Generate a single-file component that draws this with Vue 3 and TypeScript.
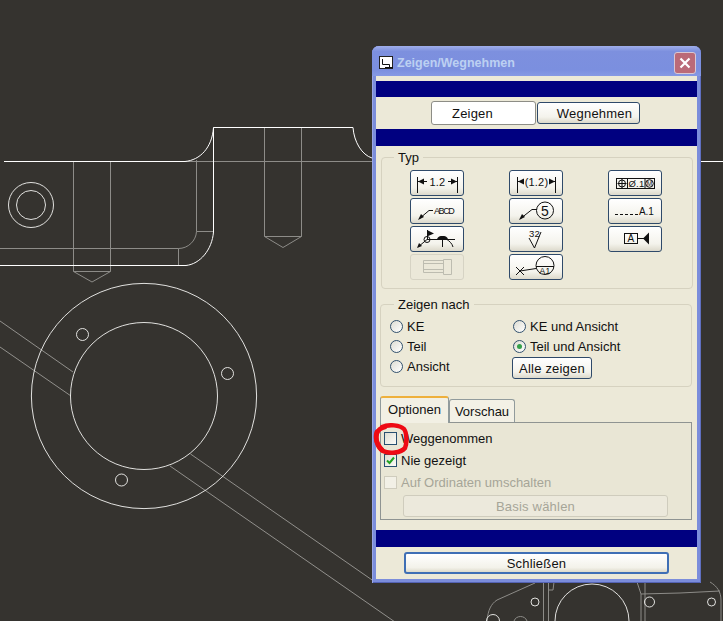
<script setup lang="ts">
import { ref } from 'vue'

type Item = { label: string; checked: boolean }

const activeTab = ref('Optionen')
const leftRadios: Item[] = [
  { label: 'KE', checked: false },
  { label: 'Teil', checked: false },
  { label: 'Ansicht', checked: false }
]
const rightRadios: Item[] = [
  { label: 'KE und Ansicht', checked: false },
  { label: 'Teil und Ansicht', checked: true }
]
</script>

<template>
  <div class="desktop">
    <!-- cad drawing behind the dialog -->
    <svg class="drawing" width="723" height="621" viewBox="0 0 723 621" fill="none">
      <g stroke="#8d8c88" stroke-width="1">
        <path d="M185 161.5H372M700 161.5H723" />
        <path d="M196.5 160V231.5H213M196.5 231.5C196 241 188 248.5 178.5 248.5H0M178.5 248.5V265" />
        <path d="M73.5 161V271.5M110.5 161V271.5M73.5 271.5H110.5M73.5 271.5L92 282L110.5 271.5" />
        <path d="M264.5 127V236.5M301.5 127V236.5M264.5 236.5H301.5M264.5 236.5L283 247.5L301.5 236.5" />
        <path d="M535 583L497 600C491 604 488 610 487 621" />
        <path d="M543.5 582V621M548.5 582V621M554 582L553 590H548M637 582L641 594V621M645 582V621" />
        <path d="M641 594L680 593L720 591M710 582C717 586 721 592 721 600V621" />
        <path d="M514 621C516 615 525 615 527 621" />
      </g>
      <g stroke="#a9a8a4" stroke-width="0.8">
        <path d="M0 321L73 372M0 347L71 396" />
        <path d="M190.5 454L375 582M170 466L395 622" />
      </g>
      <g stroke="#fff" stroke-width="1">
        <path d="M4 161.5H185C200 160 212 148 213.5 127.5H353C354 142 362 155 372 158" />
        <path d="M213.5 127.5V232C212 250 200 264 186 265.5H0" />
        <path d="M700 161.5H723" />
      </g>
      <g stroke="#f4f4f2" stroke-width="0.9">
        <circle cx="31" cy="205" r="22.5" />
        <circle cx="31" cy="205" r="14.5" />
        <circle cx="144" cy="396" r="112.6" />
        <circle cx="144" cy="396" r="73.5" />
        <circle cx="82.5" cy="334.5" r="6" />
        <circle cx="227.5" cy="373.5" r="6" />
        <circle cx="121.5" cy="480" r="6" />
        <circle cx="535" cy="602" r="4" />
        <circle cx="649.5" cy="602" r="5" />
        <circle cx="711.5" cy="602" r="4" />
        <circle cx="592" cy="621" r="37" />
        <circle cx="493" cy="621" r="6.5" />
      </g>
    </svg>

    <div class="window">
      <div class="titlebar">
        <svg class="title-icon" width="15" height="14" viewBox="0 0 15 14">
          <rect x="0.5" y="0.5" width="13" height="12" fill="#fff" stroke="#222" />
          <path d="M3.5 3V8.5H10.5V11M6 11.5H14" stroke="#111" stroke-width="1" fill="none" />
        </svg>
        <span class="title-text">Zeigen/Wegnehmen</span>
        <span class="close-btn">
          <svg width="12" height="12" viewBox="0 0 12 12">
            <path d="M1.5 1.5L10.5 10.5M10.5 1.5L1.5 10.5" stroke="#fff" stroke-width="2.2" />
          </svg>
        </span>
      </div>

      <div class="content">
        <div class="navy first"></div>
        <div class="mode-row">
          <button class="btn mode on">Zeigen</button>
          <button class="btn mode off">Wegnehmen</button>
        </div>
        <div class="navy second"></div>

        <div class="group typ">
          <span class="legend">Typ</span>
          <div class="icon-grid">
            <button class="btn icon">
              <svg width="54" height="26" viewBox="0 0 54 26">
                <path d="M7.5 7V23M47.5 7V23M8 11.5H17M38 11.5H47" stroke="#111" fill="none" />
                <path d="M8 11.5L14 8.5V14.5ZM47 11.5L41 8.5V14.5Z" fill="#111" />
                <text x="27.5" y="15.5" class="t" font-size="11" text-anchor="middle">1.2</text>
              </svg>
            </button>
            <button class="btn icon">
              <svg width="54" height="26" viewBox="0 0 54 26">
                <path d="M8.5 7V23M46.5 7V23M9 11.5H15M40 11.5H46" stroke="#111" fill="none" />
                <path d="M9 11.5L15 8.5V14.5ZM46 11.5L40 8.5V14.5Z" fill="#111" />
                <text x="27.5" y="15.5" class="t" font-size="11" text-anchor="middle">(1.2)</text>
              </svg>
            </button>
            <button class="btn icon">
              <svg width="54" height="26" viewBox="0 0 54 26">
                <rect x="8.5" y="8.5" width="38" height="10" fill="none" stroke="#111" />
                <path d="M19.5 8V18M37 8V18" stroke="#111" />
                <circle cx="14" cy="13.5" r="3.5" fill="none" stroke="#111" />
                <path d="M14 9V18M9.5 13.5H18.5" stroke="#111" />
                <text x="20.5" y="17" class="t" font-size="9.5">Ø.1</text>
                <circle cx="41.5" cy="13.5" r="3.8" fill="none" stroke="#111" />
                <text x="41.5" y="16" class="t" font-size="6.5" text-anchor="middle">M</text>
              </svg>
            </button>

            <button class="btn icon">
              <svg width="54" height="26" viewBox="0 0 54 26">
                <path d="M9 21L19 12.5H23" stroke="#111" fill="none" />
                <path d="M8 22L11 16L14 19Z" fill="#111" />
                <text x="24" y="16" class="t" font-size="9" textLength="21">ABCD</text>
              </svg>
            </button>
            <button class="btn icon">
              <svg width="54" height="26" viewBox="0 0 54 26">
                <path d="M11 21L23 11.5H28" stroke="#111" fill="none" />
                <path d="M10 22L13 16L16 19Z" fill="#111" />
                <circle cx="36" cy="12.5" r="8.5" fill="none" stroke="#111" />
                <text x="36" y="17.5" class="t" font-size="14" text-anchor="middle">5</text>
              </svg>
            </button>
            <button class="btn icon">
              <svg width="54" height="26" viewBox="0 0 54 26">
                <path d="M7 16.5H10M12 16.5H15M17 16.5H20M22 16.5H25M27 16.5H30" stroke="#111" />
                <text x="31" y="17" class="t" font-size="10" textLength="15">A.1</text>
              </svg>
            </button>

            <button class="btn icon">
              <svg width="54" height="26" viewBox="0 0 54 26">
                <path d="M8 21L17 13.5H45M32.5 14V21M37 13.5C39 15 42 17 43 21" stroke="#111" fill="none" />
                <path d="M7 22L9 17L12 20Z" fill="#111" />
                <circle cx="17" cy="13.5" r="3" fill="none" stroke="#111" />
                <path d="M17.5 4V13" stroke="#111" />
                <path d="M17 4L24 7.5L17 10.5Z" fill="#111" />
                <path d="M27 13C28 10.5 30 10 32.5 10C35 10 37 10.5 38 13Z" fill="#111" />
              </svg>
            </button>
            <button class="btn icon">
              <svg width="54" height="26" viewBox="0 0 54 26">
                <path d="M20 12L25.5 22L32 6" stroke="#111" fill="none" />
                <text x="20" y="11" class="t" font-size="9.5">32</text>
              </svg>
            </button>
            <button class="btn icon">
              <svg width="54" height="26" viewBox="0 0 54 26">
                <rect x="16.5" y="7.5" width="13" height="10" fill="none" stroke="#111" />
                <text x="23" y="16" class="t" font-size="10" text-anchor="middle">A</text>
                <path d="M30 12.5H37" stroke="#111" />
                <path d="M35 12.5L41 6.5V18.5Z" fill="#111" />
              </svg>
            </button>

            <button class="btn icon disabled">
              <svg width="54" height="26" viewBox="0 0 54 26">
                <path d="M13.5 6.5H33.5V18.5H13.5ZM33.5 5.5H41.5V20.5H33.5ZM14 9.5H33M14 15.5H33" stroke="#bdbcb0" fill="none" />
              </svg>
            </button>
            <button class="btn icon">
              <svg width="54" height="26" viewBox="0 0 54 26">
                <path d="M7 13L15 21M15 13L7 21M11 17L27 14.5" stroke="#111" fill="none" />
                <circle cx="36" cy="11.5" r="9" fill="none" stroke="#111" />
                <path d="M27 12.5H45" stroke="#111" />
                <text x="36" y="20" class="t" font-size="8.5" text-anchor="middle">A1</text>
              </svg>
            </button>
          </div>
        </div>

        <div class="group nach">
          <span class="legend">Zeigen nach</span>
          <div class="radio-cols">
            <div class="radio-col">
              <label v-for="r in leftRadios" :key="r.label" class="radio-row">
                <span class="radio"></span>{{ r.label }}
              </label>
            </div>
            <div class="radio-col">
              <label v-for="r in rightRadios" :key="r.label" class="radio-row">
                <span class="radio" :class="{ checked: r.checked }"></span>{{ r.label }}
              </label>
              <button class="btn all">Alle zeigen</button>
            </div>
          </div>
        </div>

        <div class="tabs">
          <span class="tab" :class="{ active: activeTab === 'Optionen' }">Optionen</span>
          <span class="tab" :class="{ active: activeTab === 'Vorschau' }">Vorschau</span>
        </div>
        <div class="panel">
          <label class="check-row"><span class="check"></span>Weggenommen</label>
          <label class="check-row">
            <span class="check">
              <svg width="11" height="11" viewBox="0 0 11 11">
                <path d="M2 5.5L4.5 8L9 2.5" stroke="#21a121" stroke-width="2" fill="none" />
              </svg>
            </span>
            Nie gezeigt
          </label>
          <label class="check-row off"><span class="check"></span>Auf Ordinaten umschalten</label>
          <button class="btn basis">Basis wählen</button>
        </div>

        <div class="navy third"></div>
        <div class="close-row">
          <button class="btn close-main">Schließen</button>
        </div>
      </div>

      <!-- hand drawn mark around the first checkbox -->
      <svg class="scribble" width="38" height="34" viewBox="0 0 38 34" fill="none">
        <path d="M9 4C16 1 27 2 31 6C34 10 34 20 32 25C28 30 16 31 10 28C4 24 2 16 4 10C5 7 8 5 12 4" stroke="#ee0a14" stroke-width="4.5" stroke-linecap="round" />
        <path d="M4 9C2 15 4 22 9 27" stroke="#ee0a14" stroke-width="5" stroke-linecap="round" />
      </svg>
    </div>
  </div>
</template>

<style scoped>
.desktop {
  position: relative;
  width: 723px;
  height: 621px;
  overflow: hidden;
  background: #35332f;
  font-family: "Liberation Sans", Arial, sans-serif;
  font-size: 13px;
  color: #111;
}

.drawing {
  position: absolute;
  left: 0;
  top: 0;
}

.window {
  position: absolute;
  left: 372px;
  top: 46px;
  width: 329px;
  height: 537px;
  display: flex;
  flex-direction: column;
  box-sizing: border-box;
  padding: 0 4px 4px;
  border-radius: 7px 7px 0 0;
  background: #7b8ddb;
  box-shadow: inset 1px 0 #9aa6e6, inset -1px 0 #5f6fc0, inset 0 -1px #5563b4;
}

.titlebar {
  height: 30px;
  flex: none;
  display: flex;
  align-items: center;
  margin: 0 -4px;
  padding: 3px 5px 0 7px;
  box-sizing: border-box;
  border-radius: 7px 7px 0 0;
  background: linear-gradient(#a0aeeb, #7d90de 18%, #7b8fdf 80%, #8699e4);
}

.title-icon {
  flex: none;
}

.title-text {
  margin-left: 3px;
  font-size: 12.5px;
  font-weight: bold;
  color: #bcd0f2;
}

.close-btn {
  margin-left: auto;
  width: 20px;
  height: 20px;
  display: flex;
  align-items: center;
  justify-content: center;
  border: 1px solid #d9c8d4;
  border-radius: 3px;
  background: #bb6a78;
}

.content {
  flex: 1;
  display: flex;
  flex-direction: column;
  background: #ece9d8;
  padding-top: 5px;
}

.navy {
  flex: none;
  background: #000080;
}

.navy.first {
  height: 16px;
}

.navy.second {
  height: 17px;
}

.navy.third {
  height: 17px;
  margin-top: 10px;
}

.mode-row {
  height: 32px;
  flex: none;
  display: flex;
  align-items: center;
  gap: 1px;
  padding-left: 55px;
}

.btn {
  display: block;
  box-sizing: border-box;
  padding: 0;
  font-family: inherit;
  font-size: 13px;
  letter-spacing: 0.2px;
  color: #111;
  border: 1px solid #2f4a6a;
  border-radius: 3px;
  background: linear-gradient(#fff, #f4f3ec 70%, #dcd9cb);
}

.mode.on {
  width: 105px;
  height: 24px;
  padding-right: 22px;
  background: #fff;
  border-color: #8d8d86;
}

.mode.off {
  width: 103px;
  height: 22px;
  padding-left: 12px;
}

.group {
  position: relative;
  flex: none;
  box-sizing: border-box;
  border: 1px solid #d6d2c0;
  border-radius: 4px;
}

.legend {
  position: absolute;
  top: -8px;
  padding: 0 4px;
  line-height: 15px;
  background: #ece9d8;
}

.typ {
  width: 312px;
  height: 132px;
  margin: 11px 0 0 5px;
  padding: 12px 0 0 28px;
}

.typ .legend {
  left: 12px;
}

.icon-grid {
  display: grid;
  grid-template-columns: repeat(3, 54px);
  grid-auto-rows: 26px;
  column-gap: 45px;
  row-gap: 2px;
}

.icon svg {
  display: block;
  margin: -1px;
}

.t {
  font-family: "Liberation Sans", Arial, sans-serif;
  fill: #111;
}

.icon.disabled {
  border-color: #d6d3c4;
  background: #ebe8d9;
}

.nach {
  width: 312px;
  height: 83px;
  margin: 15px 0 0 4px;
  padding: 11px 0 0 9px;
}

.nach .legend {
  left: 13px;
}

.radio-cols {
  display: flex;
}

.radio-col {
  width: 122px;
}

.radio-col:first-child {
  width: 123px;
}

.radio-row {
  display: flex;
  align-items: center;
  height: 20px;
  white-space: nowrap;
}

.radio {
  width: 13px;
  height: 13px;
  margin-right: 4px;
  flex: none;
  box-sizing: border-box;
  display: flex;
  align-items: center;
  justify-content: center;
  border: 1px solid #32516e;
  border-radius: 50%;
  background: linear-gradient(135deg, #dcdcd2, #fff);
}

.radio.checked::after {
  content: "";
  width: 5px;
  height: 5px;
  border-radius: 50%;
  background: #34a04a;
}

.btn.all {
  width: 80px;
  height: 22px;
  margin: 1px 0 0 -1px;
}

.tabs {
  flex: none;
  height: 26px;
  margin: 9px 0 0 4px;
  display: flex;
  align-items: flex-end;
}

.tab {
  box-sizing: border-box;
  width: 66px;
  height: 23px;
  line-height: 23px;
  text-align: center;
  border: 1px solid #919b9c;
  border-bottom: none;
  border-radius: 3px 3px 0 0;
  background: #f3f1e6;
}

.tab.active {
  position: relative;
  z-index: 1;
  width: 69px;
  height: 27px;
  margin-bottom: -1px;
  line-height: 24px;
  border-top: 2px solid #eeb03c;
  background: #f2f0e4;
}

.panel {
  flex: none;
  box-sizing: border-box;
  width: 312px;
  height: 98px;
  margin-left: 4px;
  padding: 4px 0 0 3px;
  border: 1px solid #8f9492;
  background: #e9e6d5;
}

.check-row {
  display: flex;
  align-items: center;
  height: 22px;
  white-space: nowrap;
}

.check-row.off {
  color: #a6a598;
}

.check {
  width: 13px;
  height: 13px;
  margin-right: 4px;
  flex: none;
  box-sizing: border-box;
  display: flex;
  align-items: center;
  justify-content: center;
  border: 1px solid #274f70;
  background: linear-gradient(135deg, #dcdcd2, #fcfcf8);
}

.check svg {
  display: block;
}

.off .check {
  border-color: #cfccbd;
  background: #f2f0e6;
}

.btn.basis {
  width: 265px;
  height: 22px;
  margin: 2px 0 0 19px;
  color: #a6a598;
  border-color: #cfccbd;
  background: #ece9dc;
}

.close-row {
  padding: 5px 0 0 28px;
}

.btn.close-main {
  width: 265px;
  height: 22px;
  border: 2px solid #3f6fb5;
  background: linear-gradient(#fff, #f3f2ea 75%, #dedbcc);
}

.scribble {
  position: absolute;
  left: 1px;
  top: 377px;
}
</style>
